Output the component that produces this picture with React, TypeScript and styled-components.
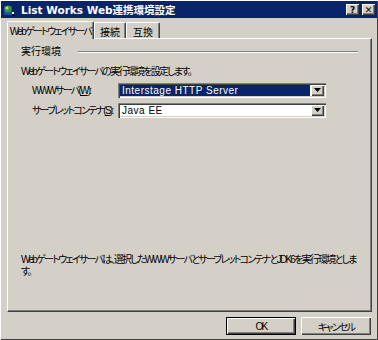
import styled, { createGlobalStyle } from "styled-components"

const GlobalStyle = createGlobalStyle`
  html, body {
    margin: 0;
    padding: 0;
    background: #d4d0c8;
  }
  body {
    font-family: "Liberation Sans", "Noto Sans CJK JP", sans-serif;
    font-size: 10px;
    letter-spacing: -1.75px;
    font-feature-settings: "palt";
    color: #000;
  }
  * { box-sizing: border-box; }
`

const Window = styled.div`
  width: 378px;
  height: 340px;
  background: #d4d0c8;
  display: flex;
  flex-direction: column;
  padding: 1px;
  box-shadow: inset 1px 1px 0 #ffffff, inset -1px -1px 0 #404040;
`

const TitleBar = styled.div`
  height: 17px;
  background: #0a246a;
  display: flex;
  align-items: center;
  padding: 0 2px 0 2px;
  gap: 2px;
`

const TitleText = styled.span`
  flex: 1;
  margin-left: 2px;
  color: #fff;
  font-weight: bold;
  font-size: 10.5px;
  letter-spacing: 0;
  white-space: nowrap;
  font-family: "DejaVu Sans", "Noto Sans CJK JP", sans-serif;
`

const CaptionButton = styled.div`
  width: 13px;
  height: 11px;
  background: #d4d0c8;
  box-shadow: inset 1px 1px 0 #fff, inset -1px -1px 0 #404040, inset -2px -2px 0 #808080;
  display: flex;
  align-items: center;
  justify-content: center;
  font: bold 9px "DejaVu Sans", sans-serif;
  letter-spacing: 0;
  color: #000;
  & + & { margin-left: 1px; }
`

const Body = styled.div`
  flex: 1;
  display: flex;
  flex-direction: column;
  padding: 2px 5px 0 6px;
`

const TabStrip = styled.div`
  display: flex;
  align-items: flex-end;
  height: 18px;
  position: relative;
  z-index: 1;
`

const Tab = styled.div<{ $active?: boolean; $w: number; $loose?: boolean }>`
  width: ${(p) => p.$w}px;
  height: ${(p) => (p.$active ? 18 : 16)}px;
  margin-bottom: ${(p) => (p.$active ? -1 : 0)}px;
  background: #d4d0c8;
  border-top: 1px solid #fff;
  border-left: 1px solid #fff;
  border-right: 1px solid #404040;
  border-top-left-radius: 2px;
  border-top-right-radius: 2px;
  box-shadow: inset -1px 0 0 #808080;
  display: flex;
  align-items: center;
  justify-content: center;
  white-space: nowrap;
  letter-spacing: ${(p) => (p.$loose ? "0" : "-1.75px")};
  padding-top: ${(p) => (p.$active ? 0 : 1)}px;
`

const Panel = styled.div`
  height: 274px;
  border-top: 1px solid #fff;
  border-left: 1px solid #fff;
  border-right: 1px solid #404040;
  border-bottom: 1px solid #404040;
  box-shadow: inset -1px -1px 0 #808080;
  display: flex;
  flex-direction: column;
  padding: 7px 13px 33px 13px;
`

const GroupHeader = styled.div`
  display: flex;
  align-items: center;
  gap: 17px;
  height: 12px;
`

const GroupLabel = styled.div`
  white-space: nowrap;
  line-height: 12px;
  letter-spacing: 0;
`

const GroupLine = styled.div`
  flex: 1;
  height: 2px;
  border-top: 1px solid #808080;
  border-bottom: 1px solid #fff;
`

const Text = styled.div`
  white-space: nowrap;
  line-height: 12px;
`

const Description = styled(Text)`
  margin: 8px 0 0 0;
`

const FormGrid = styled.div`
  display: grid;
  grid-template-columns: 86px 208px;
  row-gap: 5px;
  margin: 5px 0 0 11px;
  align-items: center;
`

const Label = styled(Text)``

const Combo = styled.div`
  height: 15px;
  background: #fff;
  box-shadow: inset 1px 1px 0 #808080, inset 2px 2px 0 #404040, inset -1px -1px 0 #fff, inset -2px -2px 0 #d4d0c8;
  display: flex;
  align-items: center;
  padding: 2px;
`

const ComboValue = styled.div<{ $selected?: boolean }>`
  flex: 1;
  height: 11px;
  display: flex;
  align-items: center;
  padding-left: 2px;
  margin-right: 1px;
  background: ${(p) => (p.$selected ? "#0a246a" : "transparent")};
  color: ${(p) => (p.$selected ? "#fff" : "#000")};
  font-size: 10px;
  letter-spacing: 0.5px;
  white-space: nowrap;
  font-family: "Liberation Sans", sans-serif;
`

const ComboButton = styled.div`
  width: 13px;
  height: 11px;
  background: #d4d0c8;
  box-shadow: inset 1px 1px 0 #fff, inset -1px -1px 0 #404040, inset -2px -2px 0 #808080;
  display: flex;
  align-items: center;
  justify-content: center;
  padding-bottom: 1px;
`

const Note = styled(Text)`
  margin-top: auto;
`

const Footer = styled.div`
  display: flex;
  justify-content: flex-end;
  gap: 5px;
  padding: 5px 1px 0 0;
`

const Button = styled.div<{ $default?: boolean }>`
  width: 70px;
  height: 18px;
  background: #d4d0c8;
  display: flex;
  align-items: center;
  justify-content: center;
  border: ${(p) => (p.$default ? "1px solid #000" : "none")};
  box-shadow: inset 1px 1px 0 #fff, inset -1px -1px 0 #404040, inset -2px -2px 0 #808080;
`

function AppIcon() {
  return (
    <svg width="14" height="14" viewBox="0 0 14 14">
      <rect x="1" y="3" width="8" height="9" fill="#1c4ea8" />
      <circle cx="5" cy="6" r="3.5" fill="#2c9a3c" />
      <circle cx="4" cy="5" r="1.6" fill="#e8d040" />
      <path d="M8 9 L12 13 L10 13 Z" fill="#000" />
      <rect x="9" y="9" width="2" height="2" fill="#fff" />
    </svg>
  )
}

function Arrow() {
  return (
    <svg width="7" height="4" viewBox="0 0 7 4">
      <path d="M0 0 H7 L3.5 4 Z" fill="#000" />
    </svg>
  )
}

export default function App() {
  return (
    <>
      <GlobalStyle />
      <Window>
        <TitleBar>
          <AppIcon />
          <TitleText>List Works Web連携環境設定</TitleText>
          <CaptionButton>?</CaptionButton>
          <CaptionButton>✕</CaptionButton>
        </TitleBar>
        <Body>
          <TabStrip>
            <Tab $active $w={87}>Webゲートウェイサーバ</Tab>
            <Tab $w={32} $loose>接続</Tab>
            <Tab $w={34} $loose>互換</Tab>
          </TabStrip>
          <Panel>
            <GroupHeader>
              <GroupLabel>実行環境</GroupLabel>
              <GroupLine />
            </GroupHeader>
            <Description>Webゲートウェイサーバの実行環境を設定します。</Description>
            <FormGrid>
              <Label>WWWサーバ(<u>W</u>):</Label>
              <Combo>
                <ComboValue $selected>Interstage HTTP Server</ComboValue>
                <ComboButton><Arrow /></ComboButton>
              </Combo>
              <Label>サーブレットコンテナ(<u>S</u>):</Label>
              <Combo>
                <ComboValue>Java EE</ComboValue>
                <ComboButton><Arrow /></ComboButton>
              </Combo>
            </FormGrid>
            <Note>
              Webゲートウェイサーバは、選択したWWWサーバとサーブレットコンテナとJDK6を実行環境としま
              <br />す。
            </Note>
          </Panel>
          <Footer>
            <Button $default>OK</Button>
            <Button>キャンセル</Button>
          </Footer>
        </Body>
      </Window>
    </>
  )
}
